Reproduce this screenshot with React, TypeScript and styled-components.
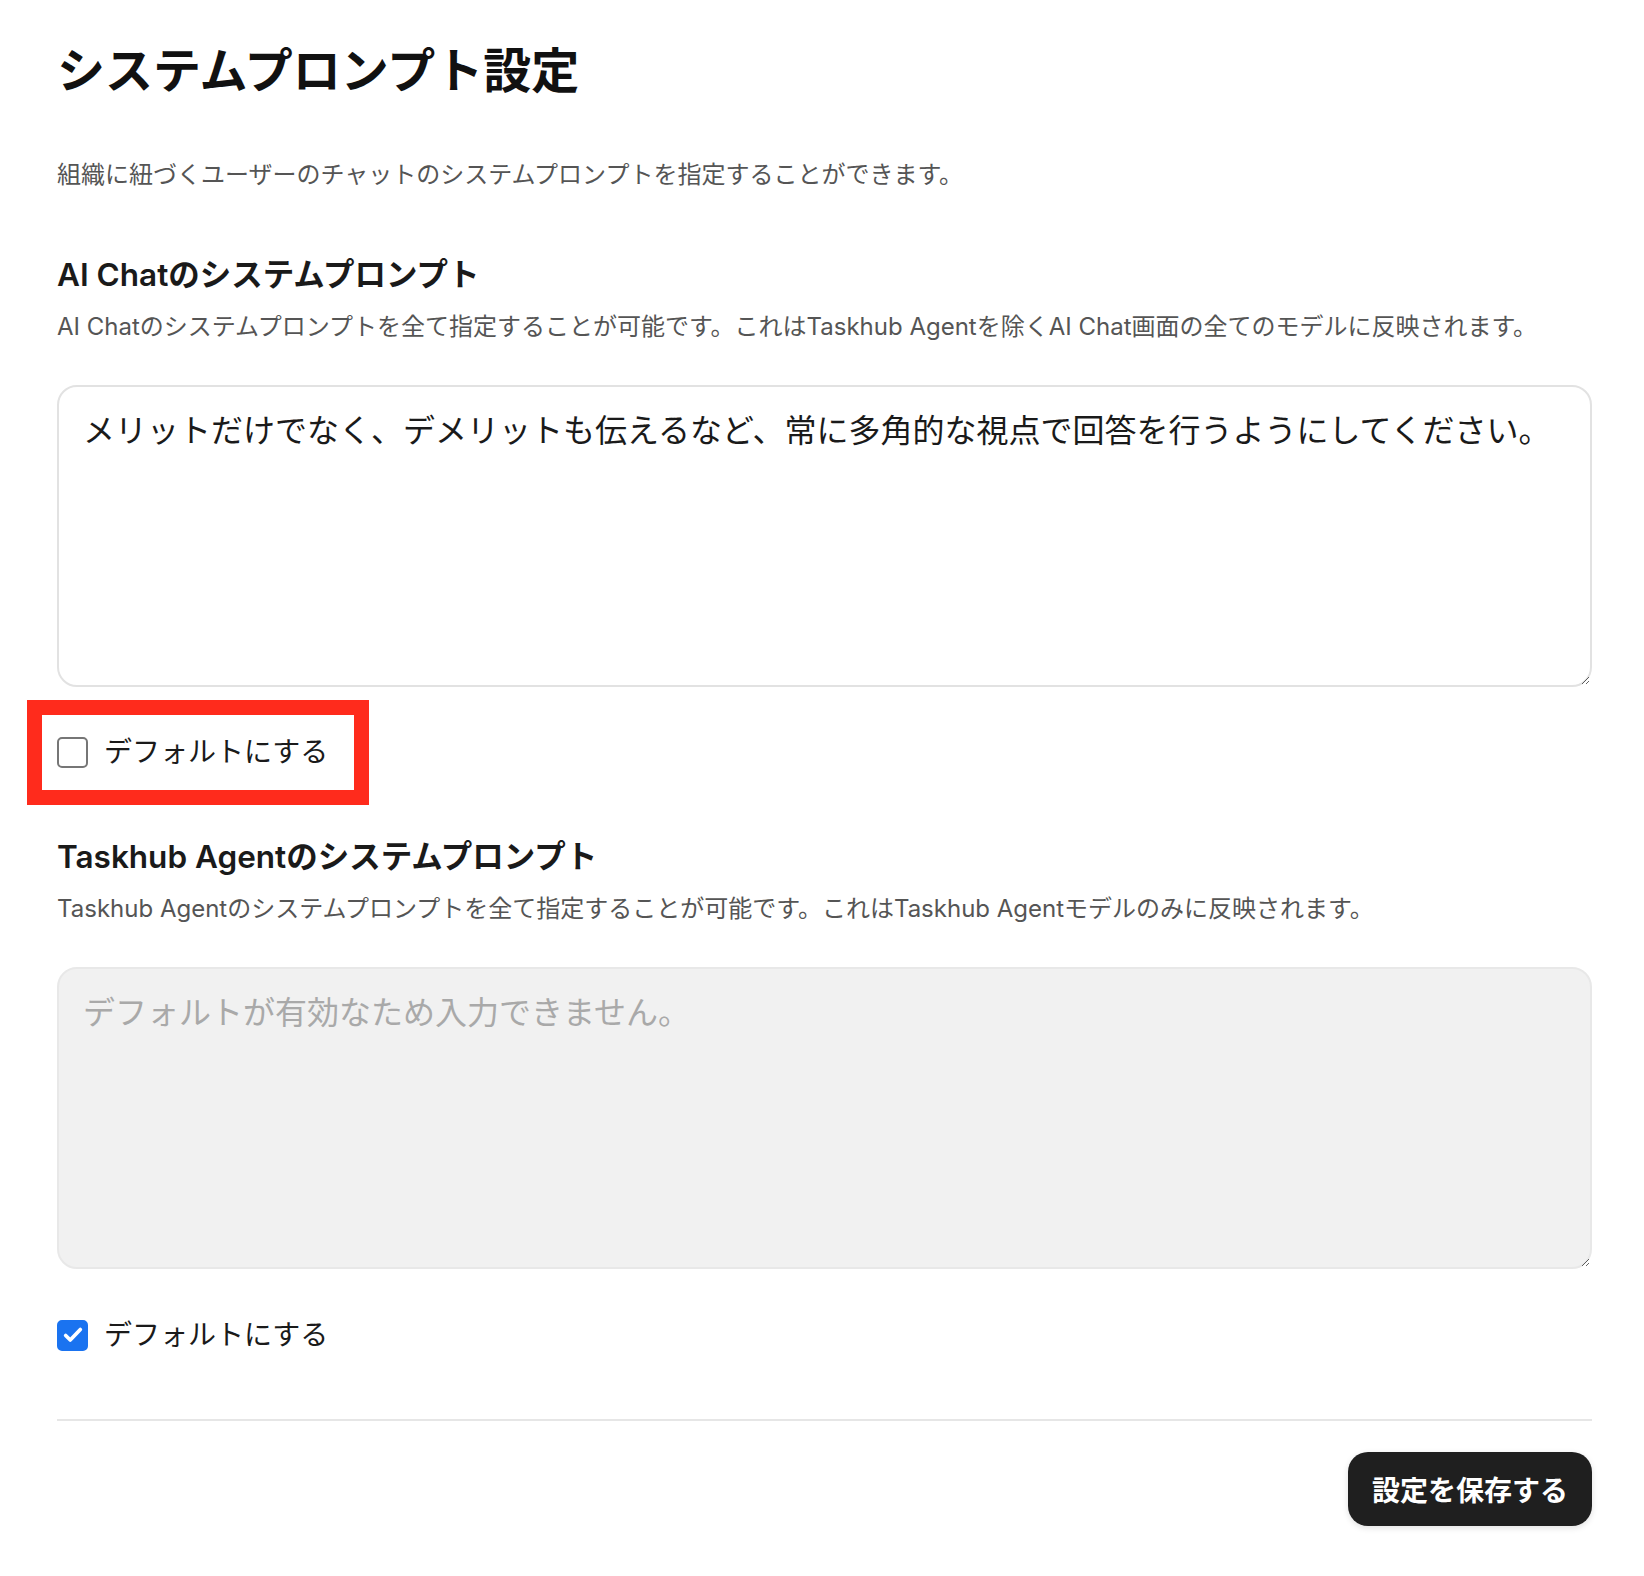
import React, { useState } from 'react';
import styled, { createGlobalStyle } from 'styled-components';

const GlobalStyle = createGlobalStyle`
  html, body {
    margin: 0;
    padding: 0;
    background: #ffffff;
  }
  body {
    font-family: Inter, "Noto Sans CJK JP", sans-serif;
    color: #1a1a1a;
  }
  * {
    box-sizing: border-box;
  }
`;

const Page = styled.div`
  width: 1644px;
  padding: 35px 52px 50px 57px;
  display: flex;
  flex-direction: column;
`;

const Title = styled.h1`
  margin: 0;
  font-size: 48px;
  line-height: 72px;
  font-weight: 700;
  color: #111111;
`;

const Lead = styled.p`
  margin: 50px 0 0;
  font-size: 24px;
  line-height: 36px;
  color: #555555;
`;

const Section = styled.section<{ $top: number }>`
  display: flex;
  flex-direction: column;
  margin-top: ${(p) => p.$top}px;
`;

const SectionTitle = styled.h2`
  margin: 0;
  font-size: 31.5px;
  line-height: 48px;
  font-weight: 600;
  color: #1a1a1a;
`;

const SectionNote = styled.p`
  margin: 10px 0 0;
  font-size: 24px;
  line-height: 36px;
  color: #555555;
`;

const PromptArea = styled.textarea`
  margin-top: 40px;
  width: 100%;
  height: 302px;
  padding: 20px 24px;
  border: 2px solid #e2e2e2;
  border-radius: 20px;
  font-family: Inter, "Noto Sans CJK JP", sans-serif;
  font-size: 32px;
  line-height: 48px;
  color: #1a1a1a;
  background: #ffffff;
  resize: vertical;
  outline: none;

  &:disabled {
    background: #f1f1f1;
    border-color: #e8e8e8;
  }

  &::placeholder {
    color: #a9a9a9;
  }
`;

const CheckRow = styled.label<{ $top: number }>`
  position: relative;
  margin-top: ${(p) => p.$top}px;
  align-self: flex-start;
  display: flex;
  align-items: center;
  gap: 16px;
  font-size: 28px;
  line-height: 42px;
  color: #1a1a1a;
  cursor: pointer;
`;

const HiddenInput = styled.input`
  position: absolute;
  opacity: 0;
  width: 0;
  height: 0;
`;

const Box = styled.span<{ $checked: boolean }>`
  width: 31px;
  height: 31px;
  border-radius: 5px;
  border: 2px solid ${(p) => (p.$checked ? '#1a73f0' : '#767676')};
  background: ${(p) => (p.$checked ? '#1a73f0' : '#ffffff')};
  display: flex;
  align-items: center;
  justify-content: center;
  flex-shrink: 0;
`;

const Highlight = styled.span`
  position: absolute;
  left: -30px;
  top: -31px;
  width: 342px;
  height: 105px;
  border: 15px solid #ff2b1c;
  pointer-events: none;
`;

const Divider = styled.hr`
  margin: 63px 0 0;
  border: none;
  border-top: 2px solid #e6e6e6;
  width: 100%;
`;

const Footer = styled.div`
  margin-top: 31px;
  display: flex;
  justify-content: flex-end;
`;

const SaveButton = styled.button`
  height: 74px;
  padding: 0 24px;
  border: none;
  border-radius: 20px;
  background: #1f1f1f;
  color: #ffffff;
  font-family: Inter, "Noto Sans CJK JP", sans-serif;
  font-size: 28px;
  font-weight: 700;
  box-shadow: 0 2px 6px rgba(0, 0, 0, 0.12);
  cursor: pointer;
`;

interface DefaultCheckProps {
  checked: boolean;
  onChange: (v: boolean) => void;
  highlighted?: boolean;
  top: number;
}

const DefaultCheck: React.FC<DefaultCheckProps> = ({ checked, onChange, highlighted, top }) => {
  return (
    <CheckRow $top={top}>
      <HiddenInput type="checkbox" checked={checked} onChange={(e) => onChange(e.target.checked)} />
      <Box $checked={checked}>
        {checked && (
          <svg width="22" height="22" viewBox="0 0 24 24" fill="none">
            <path d="M4 12.5l5 5L20 6" stroke="#ffffff" strokeWidth="4" strokeLinecap="round" strokeLinejoin="round" />
          </svg>
        )}
      </Box>
      デフォルトにする
      {highlighted && <Highlight />}
    </CheckRow>
  );
};

const App: React.FC = () => {
  const [chatDefault, setChatDefault] = useState(false);
  const [agentDefault, setAgentDefault] = useState(true);
  const [chatPrompt, setChatPrompt] = useState(
    'メリットだけでなく、デメリットも伝えるなど、常に多角的な視点で回答を行うようにしてください。'
  );
  const [agentPrompt, setAgentPrompt] = useState('');

  return (
    <>
      <GlobalStyle />
      <Page>
        <Title>システムプロンプト設定</Title>
        <Lead>組織に紐づくユーザーのチャットのシステムプロンプトを指定することができます。</Lead>

        <Section $top={58}>
          <SectionTitle>AI Chatのシステムプロンプト</SectionTitle>
          <SectionNote>
            AI Chatのシステムプロンプトを全て指定することが可能です。これはTaskhub Agentを除くAI Chat画面の全てのモデルに反映されます。
          </SectionNote>
          <PromptArea
            value={chatDefault ? '' : chatPrompt}
            disabled={chatDefault}
            placeholder="デフォルトが有効なため入力できません。"
            onChange={(e) => setChatPrompt(e.target.value)}
          />
          <DefaultCheck checked={chatDefault} onChange={setChatDefault} highlighted top={44} />
        </Section>

        <Section $top={60}>
          <SectionTitle>Taskhub Agentのシステムプロンプト</SectionTitle>
          <SectionNote>
            Taskhub Agentのシステムプロンプトを全て指定することが可能です。これはTaskhub Agentモデルのみに反映されます。
          </SectionNote>
          <PromptArea
            value={agentDefault ? '' : agentPrompt}
            disabled={agentDefault}
            placeholder="デフォルトが有効なため入力できません。"
            onChange={(e) => setAgentPrompt(e.target.value)}
          />
          <DefaultCheck checked={agentDefault} onChange={setAgentDefault} top={45} />
        </Section>

        <Divider />
        <Footer>
          <SaveButton>設定を保存する</SaveButton>
        </Footer>
      </Page>
    </>
  );
};

export default App;
